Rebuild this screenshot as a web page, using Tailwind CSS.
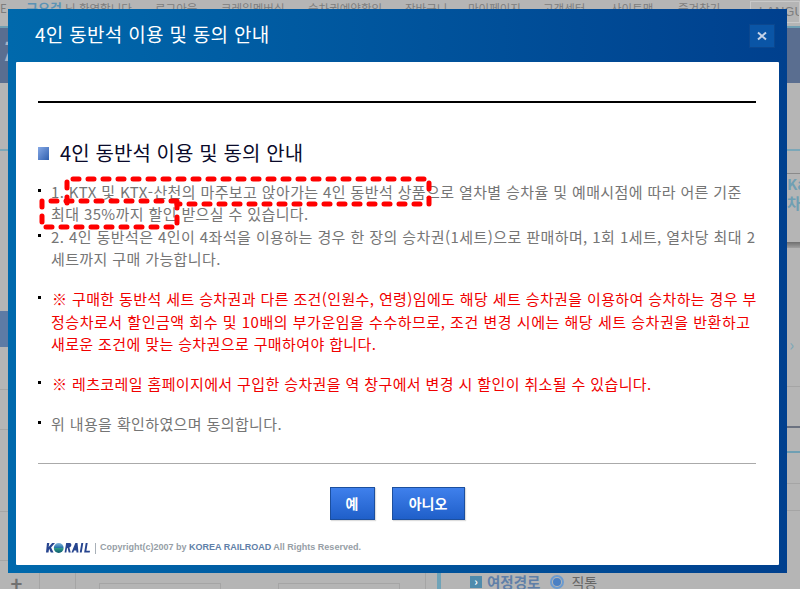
<!DOCTYPE html>
<html lang="ko">
<head>
  <meta charset="UTF-8">
  <title>4인 동반석 이용 및 동의 안내</title>
  <script src="https://cdn.jsdelivr.net/npm/@tailwindcss/browser@4"></script>
</head>
<body class="bg-[#b5b5b5] font-['Noto_Sans_CJK_KR','Noto_Sans',sans-serif]">
  <div class="relative w-[800px] h-[589px] overflow-hidden">

    <!-- Page behind the dialog -->
    <div class="flex flex-col h-full">
      <div class="h-[26px] shrink-0 flex items-start pt-[1px] text-[11.5px] leading-[14px] text-[#7d7d7d] whitespace-nowrap">
        <span class="w-[26px]">E</span>
        <span class="w-[129px]"><b class="text-[13px] text-[#5b93b5]">구요걸</b> 님 환영합니다</span>
        <span class="w-[66px]">로그아웃</span>
        <span class="w-[87px]">코레일멤버십</span>
        <span class="w-[97px]">승차권예약확인</span>
        <span class="w-[63px]">장바구니</span>
        <span class="w-[75px]">마이페이지</span>
        <span class="w-[68px]">고객센터</span>
        <span class="w-[67px]">사이트맵</span>
        <span class="w-[72px]">즐겨찾기</span>
        <span class="w-[50px] overflow-hidden border border-[#c9c9c9] pl-2 leading-[20px] font-['Liberation_Sans',sans-serif] text-[13px]">LANGUAGE</span>
      </div>
      <div class="h-[57px] shrink-0 bg-[#5a6e90] border-t-2 border-[#6f9fb3] text-[#a9b4c6] text-[26px] font-bold italic leading-[44px]">7/</div>
      <div class="h-[68px] shrink-0 border-b-2 border-[#7ba7b8]"></div>
      <div class="flex flex-1">
        <div class="w-[400px] flex flex-col">
          <div class="h-[160px] shrink-0"></div>
          <div class="h-[36px] shrink-0 bg-[#5d7ba5]"></div>
          <div class="h-[43px] shrink-0 border-b border-[#a5a5a5]"></div>
          <div class="h-[40px] shrink-0 border-b border-[#a5a5a5]"></div>
          <div class="h-[82px] shrink-0 border-b border-[#a5a5a5]"></div>
          <div class="h-[49px] shrink-0 border-b border-[#a5a5a5]"></div>
          <div class="flex flex-1 text-[#707070]">
            <div class="w-[40px] border-r border-[#a5a5a5] pr-[6px] text-center text-[20px] font-bold leading-[44px]">+</div>
            <div class="w-[36px] border-r border-[#a5a5a5]"></div>
            <div class="w-[23px]"></div>
            <div class="w-[123px] mt-[22px] border border-[#a5a5a5]"></div>
            <div class="w-[57px]"></div>
            <div class="w-[123px] mt-[22px] border border-[#a5a5a5]"></div>
          </div>
        </div>
        <div class="w-[400px] flex flex-col">
          <div class="h-[23px] shrink-0 border-b border-[#8a8a8a]"></div>
          <div class="h-[38px] shrink-0 flex justify-end text-[#6f9fb3] text-[15px] font-bold leading-[19px]"><span class="w-[13px] overflow-hidden whitespace-nowrap">Ka<br>차</span></div>
          <div class="h-[6px] mt-[30px] shrink-0 bg-gradient-to-b from-[#6f6f6f] to-[#a0a0a0]"></div>
          <div class="h-[103px] shrink-0 flex justify-end items-end pr-[6px] text-[#7ba7b8] text-[16px] leading-[14px]">›</div>
          <div class="h-[36px] shrink-0 border-b border-[#a5a5a5]"></div>
          <div class="h-[41px] shrink-0 border-b-2 border-[#6b7280]"></div>
          <div class="h-[25px] shrink-0 border-b-2 border-[#6f9fb3]"></div>
          <div class="h-[31px] shrink-0 border-b border-[#a5a5a5]"></div>
          <div class="h-[27px] shrink-0 border-b border-[#a5a5a5]"></div>
          <div class="h-[51px] shrink-0"></div>
          <div class="flex flex-1 pl-[25px]">
            <div class="w-[1px] bg-[#a5a5a5]"></div>
            <div class="w-[11px]"></div>
            <div class="w-[4px] bg-[#6fa3b8]"></div>
            <div class="flex items-center pl-[29px] h-[40px] whitespace-nowrap">
              <span class="w-[12px] h-[12px] bg-[#4f8bac] text-white text-[11px] leading-[11px] text-center font-bold">›</span>
              <span class="ml-[5px] text-[14.5px] font-bold text-[#5f7fa8]">여정경로</span>
              <span class="ml-[10px] w-[14px] h-[14px] rounded-full border-2 border-[#6b9bd0] flex items-center justify-center"><span class="w-[8px] h-[8px] rounded-full bg-[#4a80c4]"></span></span>
              <span class="ml-[7px] text-[14px] text-[#666]">직통</span>
            </div>
          </div>
        </div>
      </div>
    </div>

    <!-- Dialog -->
    <div class="absolute left-[8px] top-[9px] w-[779px] h-[564px] flex flex-col px-[8px] pb-[8px] bg-gradient-to-r from-[#0069ac] to-[#00408e]">
      <div class="h-[53px] shrink-0 flex items-start justify-between pl-[19px] pr-[4px] text-white">
        <h1 class="text-[19px] leading-[50px] font-normal tracking-[0.3px]">4인 동반석 이용 및 동의 안내</h1>
        <button class="mt-[15px] w-[26px] h-[24px] flex items-center justify-center bg-[#0a55a6] border border-[#0b478f]">
          <svg width="10" height="10" viewBox="0 0 10 10" stroke="#c5d3e8" stroke-width="2" fill="none"><path d="M1 1.500l8 7M9 1.500l-8 7"/></svg>
        </button>
      </div>
      <div class="relative flex-1 bg-white rounded-[1px] flex flex-col pl-[22px] pr-[23px]">
        <div class="mt-[39px] h-[2px] bg-black"></div>

        <div class="mt-[37px] flex items-center h-[26px]">
          <span class="w-[11px] h-[13px] bg-gradient-to-br from-[#86a9e6] to-[#2f5fae]"></span>
          <h2 class="ml-[11px] text-[20px] tracking-[0.1px] font-normal text-[#0a0a2a] leading-[26px]">4인 동반석 이용 및 동의 안내</h2>
        </div>

        <ul class="mt-[14.5px] text-[15px] leading-[22.5px] tracking-[0.38px] text-[#757575] whitespace-nowrap">
          <li class="flex"><span class="w-[3px] h-[3px] mt-[8px] mr-[10px] shrink-0 bg-black"></span><p>1. KTX 및 KTX-산천의 마주보고 앉아가는 4인 동반석 상품으로 열차별 승차율 및 예매시점에 따라 어른 기준<br>최대 35%까지 할인 받으실 수 있습니다.</p></li>
          <li class="flex"><span class="w-[3px] h-[3px] mt-[8px] mr-[10px] shrink-0 bg-black"></span><p><span class="tracking-[0.42px]">2. 4인 동반석은 4인이 4좌석을 이용하는 경우 한 장의 승차권(1세트)으로 판매하며, 1회 1세트, 열차당 최대 2</span><br>세트까지 구매 가능합니다.</p></li>
          <li class="flex mt-[17.5px] text-[#f00000]"><span class="w-[3px] h-[3px] mt-[8px] mr-[10px] shrink-0 bg-black"></span><p><span class="ml-[1px]">※</span> 구매한 동반석 세트 승차권과 다른 조건(인원수, 연령)임에도 해당 세트 승차권을 이용하여 승차하는 경우 부<br><span class="tracking-[0.52px]">정승차로서 할인금액 회수 및 10배의 부가운임을 수수하므로, 조건 변경 시에는 해당 세트 승차권을 반환하고</span><br>새로운 조건에 맞는 승차권으로 구매하여야 합니다.</p></li>
          <li class="flex mt-[17.5px] text-[#f00000]"><span class="w-[3px] h-[3px] mt-[8px] mr-[10px] shrink-0 bg-black"></span><p><span class="ml-[1px]">※</span> 레츠코레일 홈페이지에서 구입한 승차권을 역 창구에서 변경 시 할인이 취소될 수 있습니다.</p></li>
          <li class="flex mt-[17.5px]"><span class="w-[3px] h-[3px] mt-[8px] mr-[10px] shrink-0 bg-black"></span><p>위 내용을 확인하였으며 동의합니다.</p></li>
        </ul>

        <div class="mt-[27.5px] h-[1px] bg-[#aaaaaa]"></div>

        <div class="mt-[23px] flex justify-center gap-[17px]">
          <button class="w-[45px] h-[33px] bg-gradient-to-b from-[#3f80ec] to-[#1f5fc9] border border-[#1c4f9e] text-white text-[14px] font-bold shadow-[1px_1px_1px_#ddd]">예</button>
          <button class="w-[73px] h-[33px] bg-gradient-to-b from-[#3f80ec] to-[#1f5fc9] border border-[#1c4f9e] text-white text-[14px] font-bold shadow-[1px_1px_1px_#ddd]">아니오</button>
        </div>

        <div class="mt-[21px] ml-[8px] flex items-center h-[14px] font-['Liberation_Sans',sans-serif] text-[9px] text-[#969ea6] whitespace-nowrap">
          <svg width="45" height="14" viewBox="0 0 46 14" class="shrink-0">
            <defs>
              <linearGradient id="ball" x1="0" y1="0" x2="0" y2="1">
                <stop offset="0" stop-color="#7fb3d8"/>
                <stop offset="0.5" stop-color="#1f6fa8"/>
                <stop offset="0.55" stop-color="#2e9a86"/>
                <stop offset="1" stop-color="#0d5a70"/>
              </linearGradient>
            </defs>
            <circle cx="13" cy="7" r="5" fill="url(#ball)"/>
            <path d="M1 2h2.400l-.7 4 3.600-4h2.900l-4 4.400 2.500 5.100H4.900L3.200 7.700l-.7 3.800H0z" fill="#27458f"/>
            <path d="M19 11.500 20.600 2h3.600c2.300 0 2.400 3.600-.3 4.600l1.400 4.900h-2.100l-1.100-4.400h-.6l-.7 4.400zM26 11.500 30 2h2.200l1 9.500h-2l-.2-2h-2.300l-.8 2zM34.500 11.500 36.100 2h2l-1.600 9.500zM39 11.500 40.600 2h2l-1.300 7.800H45l-.3 1.700z" fill="#27458f"/>
          </svg>
          <span class="ml-[4px] mr-[4px] w-[1px] h-[11px] bg-[#a8b0b8]"></span>
          <span class="font-bold">Copyright(c)2007 by <span class="text-[#5f7fa8]">KOREA RAILROAD</span> All Rights Reserved.</span>
        </div>

        <!-- Red dashed annotation drawn over the first notice -->
        <svg class="absolute left-0 top-0 pointer-events-none" width="763" height="503" viewBox="0 0 763 503" fill="none">
          <path d="M51 141V117H413V142H161" stroke="#ff0000" stroke-width="5" stroke-linecap="round" stroke-linejoin="round" stroke-dasharray="6 9"/>
          <path d="M161 139H26V165H161V142" stroke="#ff0000" stroke-width="5" stroke-linecap="round" stroke-linejoin="round" stroke-dasharray="6 9"/>
        </svg>
      </div>
    </div>
  </div>
</body>
</html>
